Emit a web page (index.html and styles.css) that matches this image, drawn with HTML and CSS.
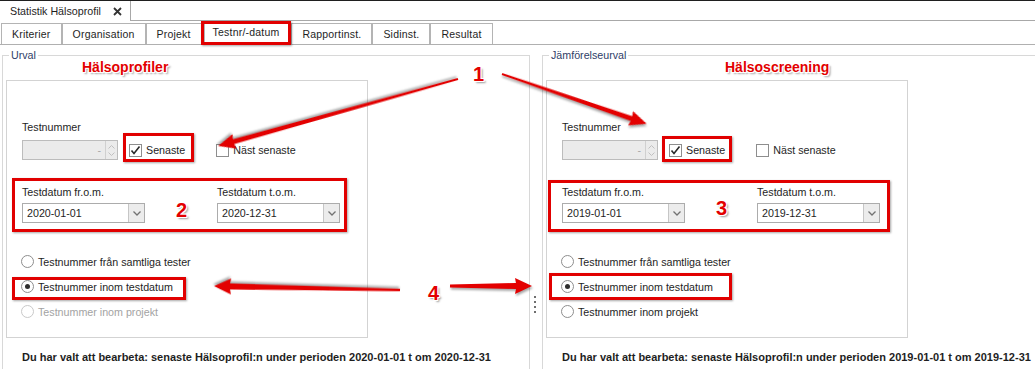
FILE: index.html
```html
<!doctype html>
<html lang="sv">
<head>
  <meta charset="UTF-8" />
  <title>Statistik Hälsoprofil</title>
  <link rel="stylesheet" href="styles.css">
</head>
<body>
<div class="page">
  <div class="doc-strip">
    <div class="doc-tab">
      <span>Statistik Hälsoprofil</span>
      <svg class="doc-close" width="9" height="9" viewBox="0 0 9 9"><path d="M1 1L8 8M8 1L1 8" /></svg>
    </div>
    <div class="doc-fill"></div>
  </div>

  <div class="tabs">
    <div class="tab">Kriterier</div>
    <div class="tab">Organisation</div>
    <div class="tab">Projekt</div>
    <div class="tab active">Testnr/-datum</div>
    <div class="tab">Rapportinst.</div>
    <div class="tab">Sidinst.</div>
    <div class="tab">Resultat</div>
  </div>

  <div class="main">
    <div class="group group-left">
      <div class="legend">Urval</div>
      <div class="box">
        <div class="field-label">Testnummer</div>
        <div class="spin-row">
          <div class="spin">
            <span class="spin-val">-</span>
            <span class="spin-btns">
              <svg width="7" height="4" viewBox="0 0 7 4"><path d="M0.5 3.5L3.5 0.5L6.5 3.5" /></svg>
              <svg width="7" height="4" viewBox="0 0 7 4"><path d="M0.5 0.5L3.5 3.5L6.5 0.5" /></svg>
            </span>
          </div>
          <label class="check first">
            <span class="cb"><svg width="11" height="11" viewBox="0 0 11 11"><path d="M1.5 5.5L4 8.5L9.5 1.5" /></svg></span>
            <span>Senaste</span>
          </label>
          <label class="check second">
            <span class="cb"></span>
            <span>Näst senaste</span>
          </label>
        </div>
        <div class="date-row">
          <div class="date-col">
            <div class="field-label">Testdatum fr.o.m.</div>
            <div class="combo">
              <span class="combo-val">2020-01-01</span>
              <span class="combo-btn"><svg width="8" height="5" viewBox="0 0 8 5"><path d="M0.5 0.5L4 4L7.5 0.5" /></svg></span>
            </div>
          </div>
          <div class="date-col">
            <div class="field-label">Testdatum t.o.m.</div>
            <div class="combo">
              <span class="combo-val">2020-12-31</span>
              <span class="combo-btn"><svg width="8" height="5" viewBox="0 0 8 5"><path d="M0.5 0.5L4 4L7.5 0.5" /></svg></span>
            </div>
          </div>
        </div>
        <div class="radios">
          <div class="radio"><span class="rb"></span>Testnummer från samtliga tester</div>
          <div class="radio"><span class="rb on"></span>Testnummer inom testdatum</div>
          <div class="radio disabled"><span class="rb"></span>Testnummer inom projekt</div>
        </div>
      </div>
      <div class="summary">Du har valt att bearbeta: senaste Hälsoprofil:n under perioden 2020-01-01 t om 2020-12-31</div>
    </div>

    <div class="splitter"><i></i><i></i><i></i><i></i></div>

    <div class="group group-right">
      <div class="legend">Jämförelseurval</div>
      <div class="box">
        <div class="field-label">Testnummer</div>
        <div class="spin-row">
          <div class="spin">
            <span class="spin-val">-</span>
            <span class="spin-btns">
              <svg width="7" height="4" viewBox="0 0 7 4"><path d="M0.5 3.5L3.5 0.5L6.5 3.5" /></svg>
              <svg width="7" height="4" viewBox="0 0 7 4"><path d="M0.5 0.5L3.5 3.5L6.5 0.5" /></svg>
            </span>
          </div>
          <label class="check first">
            <span class="cb"><svg width="11" height="11" viewBox="0 0 11 11"><path d="M1.5 5.5L4 8.5L9.5 1.5" /></svg></span>
            <span>Senaste</span>
          </label>
          <label class="check second">
            <span class="cb"></span>
            <span>Näst senaste</span>
          </label>
        </div>
        <div class="date-row">
          <div class="date-col">
            <div class="field-label">Testdatum fr.o.m.</div>
            <div class="combo">
              <span class="combo-val">2019-01-01</span>
              <span class="combo-btn"><svg width="8" height="5" viewBox="0 0 8 5"><path d="M0.5 0.5L4 4L7.5 0.5" /></svg></span>
            </div>
          </div>
          <div class="date-col">
            <div class="field-label">Testdatum t.o.m.</div>
            <div class="combo">
              <span class="combo-val">2019-12-31</span>
              <span class="combo-btn"><svg width="8" height="5" viewBox="0 0 8 5"><path d="M0.5 0.5L4 4L7.5 0.5" /></svg></span>
            </div>
          </div>
        </div>
        <div class="radios">
          <div class="radio"><span class="rb"></span>Testnummer från samtliga tester</div>
          <div class="radio"><span class="rb on"></span>Testnummer inom testdatum</div>
          <div class="radio"><span class="rb"></span>Testnummer inom projekt</div>
        </div>
      </div>
      <div class="summary">Du har valt att bearbeta: senaste Hälsoprofil:n under perioden 2019-01-01 t om 2019-12-31</div>
    </div>
  </div>

  <!-- annotations drawn on top of the screenshot -->
  <div class="mark mark-tab"></div>
  <div class="mark mark-check-l"></div>
  <div class="mark mark-check-r"></div>
  <div class="mark mark-date-l"></div>
  <div class="mark mark-date-r"></div>
  <div class="mark mark-radio-l"></div>
  <div class="mark mark-radio-r"></div>

  <div class="anno-title title-l">Hälsoprofiler</div>
  <div class="anno-title title-r">Hälsoscreening</div>
  <div class="anno-num num-1">1</div>
  <div class="anno-num num-2">2</div>
  <div class="anno-num num-3">3</div>
  <div class="anno-num num-4">4</div>

  <svg class="arrows" width="1035" height="369" viewBox="0 0 1035 369">
    <polygon points="0,-1 233,-2.5 232,-7.5 249,0 232,7.5 233,2.5 0,1" transform="translate(458 79) rotate(164.4)" />
    <polygon points="0,-1 137,-2.5 136,-7.5 153,0 136,7.5 137,2.5 0,1" transform="translate(502 74) rotate(19)" />
    <polygon points="0,-1.2 170,-3 169,-8 186,0 169,8 170,3 0,1.2" transform="translate(400 290) rotate(181.2)" />
    <polygon points="0,-1.5 66,-3 65,-8 82,0 65,8 66,3 0,1.5" transform="translate(450 286)" />
  </svg>
</div>
</body>
</html>
```

FILE: styles.css
```css
body {
  margin: 0;
  background: #fff;
  font-family: "Liberation Sans", Arial, sans-serif;
  font-size: 10.7px;
  color: #1e1e1e;
  overflow: hidden;
}
.page {
  position: relative;
  width: 1035px;
  height: 369px;
  overflow: hidden;
}

/* document tab */
.doc-strip {
  display: flex;
  height: 21px;
  border-top: 1px solid #1f1f1f;
  box-sizing: border-box;
}
.doc-tab {
  width: 131px;
  box-sizing: border-box;
  border-right: 1px solid #a8a8a8;
  padding-left: 10px;
  line-height: 19px;
  display: flex;
  align-items: center;
}
.doc-close {
  margin-left: 12px;
}
.doc-close path {
  stroke: #333;
  stroke-width: 1.8;
  fill: none;
}
.doc-fill {
  flex: 1;
  border-bottom: 1px solid #a8a8a8;
}

/* page tabs */
.tabs {
  display: flex;
  align-items: flex-end;
  height: 24px;
  box-sizing: border-box;
  padding-left: 1px;
  border-bottom: 1px solid #b0b0b0;
  font-size: 10.5px;
  letter-spacing: 0.2px;
}
.tab {
  height: 21px;
  box-sizing: border-box;
  border: 1px solid #b4b4b4;
  border-bottom: 0;
  padding: 0 10px;
  line-height: 20px;
  white-space: nowrap;
}
.tab.active {
  margin: 0 1px 0 2px;
  padding: 0 10px 0 8px;
  line-height: 17px;
}

/* group boxes */
.main {
  display: flex;
  padding: 10px 0 0 2px;
}
.group {
  border: 1px solid #d8d8d8;
  border-bottom: 0;
  height: 340px;
  box-sizing: border-box;
}
.group-left {
  width: 528px;
}
.group-right {
  flex: 1;
  margin-right: -3px;
}
.legend {
  width: fit-content;
  margin: -7px 0 0 6px;
  padding: 0 2px;
  background: #fff;
  line-height: 13px;
  color: #2f4068;
}
.splitter {
  width: 12px;
  padding-top: 241px;
}
.splitter i {
  display: block;
  width: 2px;
  height: 2px;
  background: #6f6f6f;
  margin: 0 0 3px 4px;
}

.box {
  width: 362px;
  height: 258px;
  box-sizing: border-box;
  margin: 18px 0 0 3px;
  border: 1px solid #d3d3d3;
  padding: 40px 0 0 15px;
}
.field-label {
  line-height: 13px;
  white-space: nowrap;
}

.spin-row {
  display: flex;
  align-items: center;
  margin-top: 6px;
}
.spin {
  width: 96px;
  height: 20px;
  box-sizing: border-box;
  border: 1px solid #bcbcbc;
  background: #ebebeb;
  display: flex;
  justify-content: flex-end;
}
.spin-val {
  color: #a8a8a8;
  line-height: 18px;
  padding-right: 4px;
}
.spin-btns {
  width: 11px;
  border-left: 1px solid #d0d0d0;
  display: flex;
  flex-direction: column;
  align-items: center;
  justify-content: center;
  gap: 3px;
}
.spin-btns path {
  stroke: #c0c0c0;
  fill: none;
}

.check {
  display: flex;
  align-items: center;
  gap: 4px;
  white-space: nowrap;
}
.check.first {
  margin-left: 11px;
}
.check.second {
  margin-left: 31px;
}
.cb {
  width: 13px;
  height: 13px;
  box-sizing: border-box;
  border: 1px solid #8e8e8e;
  background: #fff;
  display: flex;
  align-items: center;
  justify-content: center;
}
.cb path {
  stroke: #2a2a2a;
  stroke-width: 1.6;
  fill: none;
}

.date-row {
  display: flex;
  gap: 72px;
  margin-top: 26px;
}
.combo {
  width: 123px;
  height: 20px;
  box-sizing: border-box;
  margin-top: 4px;
  border: 1px solid #acacac;
  display: flex;
  background: #fff;
}
.combo-val {
  flex: 1;
  padding-left: 4px;
  line-height: 18px;
}
.combo-btn {
  width: 16px;
  box-sizing: border-box;
  border-left: 1px solid #c6c6c6;
  background: #ececec;
  display: flex;
  align-items: center;
  justify-content: center;
}
.combo-btn path {
  stroke: #727272;
  stroke-width: 1.3;
  fill: none;
}

.radios {
  margin-top: 26px;
}
.radio {
  height: 25px;
  display: flex;
  align-items: center;
  gap: 4px;
  white-space: nowrap;
}
.rb {
  width: 13px;
  height: 13px;
  margin-left: -1px;
  box-sizing: border-box;
  border: 1px solid #8e8e8e;
  border-radius: 50%;
  background: #fff;
  display: flex;
  align-items: center;
  justify-content: center;
}
.rb.on::after {
  content: "";
  width: 5px;
  height: 5px;
  border-radius: 50%;
  background: #2e2e2e;
}
.radio.disabled {
  color: #a3a3a3;
}
.radio.disabled .rb {
  border-color: #c9c9c9;
}

.summary {
  margin: 13px 0 0 19px;
  font-weight: bold;
  font-size: 11px;
  line-height: 13px;
  white-space: nowrap;
}

/* annotation layer */
.mark {
  position: absolute;
  box-sizing: border-box;
  border: 3px solid #e10000;
  box-shadow: 1px 1px 2px rgba(0, 0, 0, 0.35);
}
.mark-tab { left: 201px; top: 21px; width: 90px; height: 24px; }
.mark-check-l { left: 123px; top: 133px; width: 71px; height: 29px; }
.mark-check-r { left: 662px; top: 136px; width: 70px; height: 26px; }
.mark-date-l { left: 12px; top: 178px; width: 335px; height: 54px; }
.mark-date-r { left: 548px; top: 180px; width: 342px; height: 52px; }
.mark-radio-l { left: 12px; top: 277px; width: 174px; height: 23px; }
.mark-radio-r { left: 549px; top: 273px; width: 183px; height: 27px; }

.anno-title,
.anno-num {
  position: absolute;
  font-weight: bold;
  color: #e30000;
  white-space: nowrap;
  text-shadow: -1px -1px 0 #fff, 1px -1px 0 #fff, -1px 1px 0 #fff, 1px 1px 0 #fff,
    2px 2px 2px rgba(0, 0, 0, 0.4);
}
.anno-title {
  font-size: 14px;
  line-height: 16px;
}
.title-l { left: 82px; top: 59px; }
.title-r { left: 725px; top: 59px; }
.anno-num {
  font-size: 20px;
  line-height: 20px;
}
.num-1 { left: 473px; top: 64px; }
.num-2 { left: 176px; top: 200px; }
.num-3 { left: 716px; top: 198px; }
.num-4 { left: 428px; top: 283px; }

.arrows {
  position: absolute;
  left: 0;
  top: 0;
  pointer-events: none;
}
.arrows polygon {
  fill: #e30000;
  filter: drop-shadow(1px 2px 1px rgba(0, 0, 0, 0.35));
}
```
